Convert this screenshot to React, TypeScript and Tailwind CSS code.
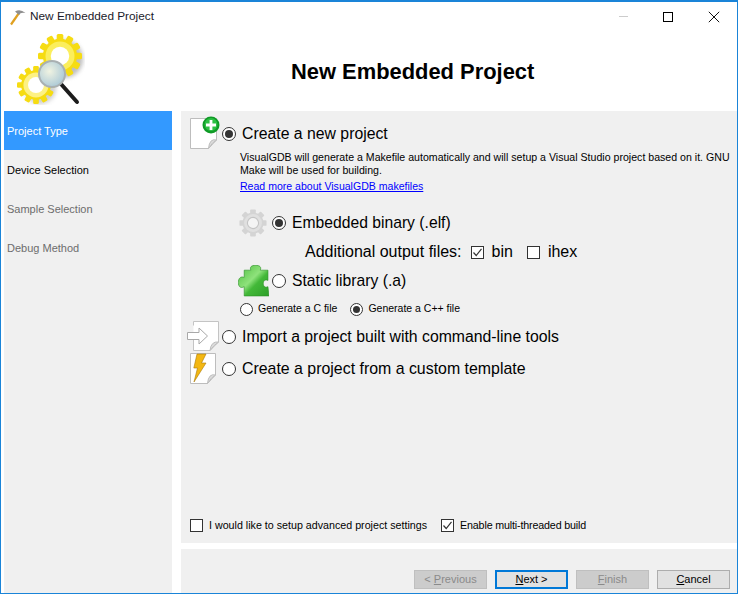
import React from 'react';

const FONT = "font-['Liberation_Sans',Arial,sans-serif]";

function Radio({ checked, small }: { checked?: boolean; small?: boolean }) {
  return (
    <span
      className={`flex shrink-0 items-center justify-center rounded-full border border-[#333333] bg-white ${
        small ? 'h-[13px] w-[13px]' : 'h-[14px] w-[14px]'
      }`}
    >
      {checked && <span className={`rounded-full bg-[#333333] ${small ? 'h-[7px] w-[7px]' : 'h-[8px] w-[8px]'}`} />}
    </span>
  );
}

function Check({ checked }: { checked?: boolean }) {
  return (
    <span className="flex h-[13px] w-[13px] shrink-0 items-center justify-center border border-[#333333] bg-white">
      {checked && (
        <svg width="11" height="11" viewBox="0 0 11 11" fill="none">
          <path d="M1.5 5.5 L4.2 8.5 L9.5 1.8" stroke="#333" strokeWidth="1.2" />
        </svg>
      )}
    </span>
  );
}

function GearShape({ cx, cy, r, outer, inner, hole, count = 12, tooth = 0.3 }: { cx: number; cy: number; r: number; outer: string; inner: string; hole: string; count?: number; tooth?: number }) {
  const teeth = Array.from({ length: count }, (_, i) => (i * 360) / count);
  return (
    <g>
      {teeth.map((a) => (
        <rect
          key={a}
          x={cx - (r * tooth) / 2}
          y={cy - r}
          width={r * tooth}
          height={r * 0.4}
          rx={r * 0.07}
          fill={outer}
          transform={`rotate(${a} ${cx} ${cy})`}
        />
      ))}
      <circle cx={cx} cy={cy} r={r * 0.78} fill={outer} />
      <circle cx={cx} cy={cy} r={r * 0.66} fill={inner} />
      <circle cx={cx} cy={cy} r={r * 0.42} fill={hole} />
    </g>
  );
}

function PageIcon({ width = 27 }: { width?: number }) {
  const right = width - 0.5;
  return (
    <svg width={width + 3} height="32" viewBox={`0 0 ${width + 3} 32`} className="overflow-visible">
      <path d={`M.5.5 H${right} V22 L${right - 8} 30.5 H.5 Z`} fill="#ffffff" stroke="#bdbdbd" />
      <path d={`M${right} 22 Q${right - 7} 20 ${right - 8} 30.5 Q${right - 4} 24 ${right} 22 Z`} fill="#dcdcdc" stroke="#bdbdbd" />
    </svg>
  );
}

function WizardIcon() {
  return (
    <svg width="70" height="72" viewBox="0 0 70 72">
      <defs>
        <radialGradient id="lens" cx="40%" cy="40%" r="65%">
          <stop offset="0" stopColor="#f0f3e2" />
          <stop offset="1" stopColor="#aac8d6" />
        </radialGradient>
        <filter id="soft" x="-30%" y="-30%" width="160%" height="160%">
          <feGaussianBlur stdDeviation="2" />
        </filter>
      </defs>
      <circle cx="49" cy="26" r="19" fill="#8a8a8a" opacity=".55" filter="url(#soft)" />
      <circle cx="25" cy="55" r="16" fill="#8a8a8a" opacity=".4" filter="url(#soft)" />
      <GearShape cx={45} cy={23} r={22} outer="#f6dc12" inner="#fbee5c" hole="#ffffff" />
      <GearShape cx={21} cy={52} r={19} outer="#f6dc12" inner="#fdf184" hole="#ffffff" />
      <path d="M46 51 L62 69" stroke="#1c1c1c" strokeWidth="4" strokeLinecap="round" />
      <circle cx="37" cy="41" r="13" fill="url(#lens)" stroke="#a9b0b2" strokeWidth="2" />
    </svg>
  );
}

function NavItem({ label, active, muted }: { label: string; active?: boolean; muted?: boolean }) {
  return (
    <div
      className={`flex h-[39px] items-center pl-[3px] pt-[2px] text-[11px] ${
        active ? 'h-[38px] bg-[#3399ff] text-white' : muted ? 'text-[#6d6d6d]' : 'text-black'
      }`}
    >
      {label}
    </div>
  );
}

function DialogButton({ children, primary, disabled }: { children: React.ReactNode; primary?: boolean; disabled?: boolean }) {
  return (
    <div
      className={`flex h-[19px] w-[73px] items-center justify-center whitespace-pre text-[11px] ${
        primary
          ? 'border-2 border-[#0078d7] bg-[#e1e1e1] text-black'
          : disabled
            ? 'border border-[#bfbfbf] bg-[#cccccc] text-[#8a8a8a]'
            : 'border border-[#adadad] bg-[#e1e1e1] text-black'
      }`}
    >
      {children}
    </div>
  );
}

export default function App() {
  return (
    <div className={`flex h-[594px] w-[738px] flex-col overflow-hidden border border-t-2 border-[#1a84d8] bg-white ${FONT}`}>
      <div className="flex h-[29px] shrink-0 items-center pl-[8px]">
        <svg width="18" height="18" viewBox="0 0 18 18" className="mt-[1px]">
          <path d="M2 16.5 L10 5" stroke="#e0a020" strokeWidth="2.2" />
          <path d="M6 3.5 Q11 0.5 16.5 5 Q11.5 3.8 10 7 Z" fill="#8f8f8f" />
        </svg>
        <span className="ml-[3px] text-[11.8px] text-[#1a1a2a]">New Embedded Project</span>
        <div className="ml-auto flex items-center">
          <span className="h-px w-[9px] bg-[#cccccc]" />
          <span className="ml-[35px] h-[10px] w-[10px] border border-black" />
          <svg width="12" height="12" viewBox="0 0 12 12" className="ml-[35px] mr-[17px]">
            <path d="M.8.8 L11.2 11.2 M11.2.8 L.8 11.2" stroke="#111" strokeWidth="1" />
          </svg>
        </div>
      </div>

      <div className="flex h-[80px] shrink-0 items-start">
        <div className="ml-[14px] mt-[2px] w-[70px]">
          <WizardIcon />
        </div>
        <h1 className="ml-[206px] mt-[28px] text-[21.9px] leading-[26px] font-bold text-black">New Embedded Project</h1>
      </div>

      <div className="flex min-h-0 flex-1">
        <div className="ml-[3px] w-[168px] shrink-0 bg-[#f0f0f0]">
          <NavItem label="Project Type" active />
          <NavItem label="Device Selection" />
          <NavItem label="Sample Selection" muted />
          <NavItem label="Debug Method" muted />
        </div>

        <div className="ml-[9px] flex min-w-0 flex-1 flex-col">
          <div className="flex h-[432px] flex-col bg-[#f0f0f0]">
            <div className="ml-[9px] mt-[7px] flex h-[31px] items-center">
              <div className="relative h-[32px] w-[30px]">
                <PageIcon />
                <svg width="18" height="18" viewBox="0 0 18 18" className="absolute left-[12px] top-[-2px]">
                  <circle cx="9" cy="9" r="8.5" fill="#0f9a26" />
                  <circle cx="9" cy="8.5" r="6.5" fill="#2cc043" />
                  <path d="M9 4 V14 M4 9 H14" stroke="#fff" strokeWidth="2.8" />
                </svg>
              </div>
              <div className="ml-[2px]"><Radio checked /></div>
              <span className="ml-[6px] text-[15.8px] leading-[18px] text-black">Create a new project</span>
            </div>
            <p className="ml-[59px] mt-[2px] w-[495px] text-[10.6px] leading-[13px] text-black">
              VisualGDB will generate a Makefile automatically and will setup a Visual Studio project based on it. GNU Make will be used for building.
            </p>
            <a className="ml-[59px] mt-[3px] text-[10.55px] leading-[13px] text-[#0000ff] underline">Read more about VisualGDB makefiles</a>

            <div className="ml-[58px] mt-[16px] flex h-[28px] items-center">
              <svg width="28" height="28" viewBox="0 0 30 30">
                <GearShape cx={15} cy={15} r={14.5} outer="#d4d4d4" inner="#e0e0e0" hole="#f4f4f4" count={8} tooth={0.42} />
                <circle cx={15} cy={15} r={6} fill="none" stroke="#c4c4c4" strokeWidth="1.2" />
              </svg>
              <div className="ml-[5px]"><Radio checked /></div>
              <span className="ml-[6px] text-[15.7px] text-black">Embedded binary (.elf)</span>
            </div>
            <div className="ml-[124px] mt-[5px] flex h-[20px] items-center text-[16px] text-black">
              <span>Additional output files:</span>
              <div className="ml-[9px]"><Check checked /></div>
              <span className="ml-[8px]">bin</span>
              <div className="ml-[14px]"><Check /></div>
              <span className="ml-[8px]">ihex</span>
            </div>
            <div className="ml-[57px] mt-[3px] flex h-[32px] items-center">
              <svg width="31" height="32" viewBox="0 0 30 31">
                <defs>
                  <linearGradient id="puzzle" x1="0" y1="0" x2="1" y2="1">
                    <stop offset="0" stopColor="#4dbe3e" />
                    <stop offset=".45" stopColor="#8fe27c" />
                    <stop offset=".6" stopColor="#43b838" />
                    <stop offset="1" stopColor="#2c9f28" />
                  </linearGradient>
                </defs>
                <path
                  d="M6 5 H12.5 C11 2 13 0.3 17 0.3 C21 0.3 23 2 21.5 5 H29 V15 C26 13.6 24.5 15.5 24.5 18 C24.5 20.5 26 22.4 29 21 L30 30 H6 V21 C2.5 23 0.3 21 0.3 17 C0.3 13 2.5 10.6 6 12 Z"
                  fill="url(#puzzle)"
                  stroke="#2a8f26"
                  strokeWidth=".6"
                />
              </svg>
              <div className="ml-[3px]"><Radio /></div>
              <span className="ml-[6px] text-[15.7px] text-black">Static library (.a)</span>
            </div>
            <div className="ml-[59px] mt-[4px] flex h-[16px] items-center text-[10.5px] text-black">
              <Radio small />
              <span className="ml-[5px]">Generate a C file</span>
              <div className="ml-[13px]"><Radio checked small /></div>
              <span className="ml-[5px]">Generate a C++ file</span>
            </div>

            <div className="ml-[6px] mt-[4px] flex h-[32px] items-center">
              <svg width="34" height="32" viewBox="0 0 34 32" className="overflow-visible">
                <path d="M6.5 4.5 V.5 H31.5 V21 L23 29.5 H6.5 V19" fill="#fff" stroke="#c4c4c4" />
                <path d="M31.5 21 Q24 20 23 29.5 Q27 24 31.5 21 Z" fill="#dcdcdc" stroke="#bdbdbd" />
                <path d="M.5 11.5 H12 V7 L20.5 15 L12 23 V18.5 H.5 Z" fill="#ffffff" stroke="#a8a8a8" />
              </svg>
              <div className="ml-[1px]"><Radio /></div>
              <span className="ml-[6px] text-[15.8px] text-black">Import a project built with command-line tools</span>
            </div>
            <div className="ml-[9px] mt-[0px] flex h-[31px] items-center">
              <div className="relative h-[32px] w-[27px]">
                <PageIcon width={26} />
                <svg width="14" height="30" viewBox="0 0 14 30" className="absolute left-[3px] top-0">
                  <path d="M4 1 H13 L8.5 10 H13 L1 29 L4.5 15 H0.8 Z" fill="#f3b712" stroke="#a9780a" strokeWidth=".6" />
                </svg>
              </div>
              <div className="ml-[5px]"><Radio /></div>
              <span className="ml-[6px] text-[15.9px] text-black">Create a project from a custom template</span>
            </div>

            <div className="ml-[9px] mt-auto mb-[11px] flex h-[13px] items-center text-[10.7px] text-black">
              <Check />
              <span className="ml-[6px]">I would like to setup advanced project settings</span>
              <div className="ml-[14px]"><Check checked /></div>
              <span className="ml-[6px] tracking-[-0.15px]">Enable multi-threaded build</span>
            </div>
          </div>

          <div className="mt-[6px] flex flex-1 items-end justify-end gap-[8px] bg-[#f0f0f0] pb-[4px] pr-[7px]">
            <DialogButton disabled>&lt; <u>P</u>revious</DialogButton>
            <DialogButton primary><u>N</u>ext &gt;</DialogButton>
            <DialogButton disabled><u>F</u>inish</DialogButton>
            <DialogButton><u>C</u>ancel</DialogButton>
          </div>
        </div>
      </div>
    </div>
  );
}
